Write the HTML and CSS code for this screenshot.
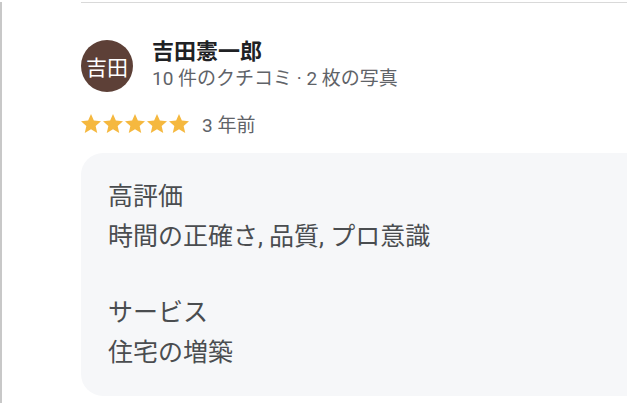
FILE: index.html
```html
<!DOCTYPE html>
<html lang="ja">
<head>
<meta charset="utf-8">
<link rel="stylesheet" href="styles.css">
</head>
<body>
<div class="frame">
  <div class="content">
    <div class="rule"></div>
    <div class="header">
      <div class="avatar">吉田</div>
      <div class="who">
        <div class="name">吉田憲一郎</div>
        <div class="meta">10 件のクチコミ · 2 枚の写真</div>
      </div>
    </div>
    <div class="rating">
      <div class="stars">
        <svg class="star" viewBox="1.9 2.2 20.2 19.2"><path d="M12 2.2l2.9 6.6 7.2.7-5.4 4.8 1.6 7.1L12 17.7l-6.3 3.7 1.6-7.1L1.9 9.5l7.2-.7z"/></svg>
        <svg class="star" viewBox="1.9 2.2 20.2 19.2"><path d="M12 2.2l2.9 6.6 7.2.7-5.4 4.8 1.6 7.1L12 17.7l-6.3 3.7 1.6-7.1L1.9 9.5l7.2-.7z"/></svg>
        <svg class="star" viewBox="1.9 2.2 20.2 19.2"><path d="M12 2.2l2.9 6.6 7.2.7-5.4 4.8 1.6 7.1L12 17.7l-6.3 3.7 1.6-7.1L1.9 9.5l7.2-.7z"/></svg>
        <svg class="star" viewBox="1.9 2.2 20.2 19.2"><path d="M12 2.2l2.9 6.6 7.2.7-5.4 4.8 1.6 7.1L12 17.7l-6.3 3.7 1.6-7.1L1.9 9.5l7.2-.7z"/></svg>
        <svg class="star" viewBox="1.9 2.2 20.2 19.2"><path d="M12 2.2l2.9 6.6 7.2.7-5.4 4.8 1.6 7.1L12 17.7l-6.3 3.7 1.6-7.1L1.9 9.5l7.2-.7z"/></svg>
      </div>
      <span class="when">3 年前</span>
    </div>
    <div class="card">
      <div class="group">
        <div class="line">高評価</div>
        <div class="line">時間の正確さ, 品質, プロ意識</div>
      </div>
      <div class="group">
        <div class="line">サービス</div>
        <div class="line">住宅の増築</div>
      </div>
    </div>
  </div>
</div>
</body>
</html>
```

FILE: styles.css
```css
html, body {
  margin: 0;
  padding: 0;
  background: #ffffff;
}
body {
  width: 627px;
  height: 403px;
  overflow: hidden;
  font-family: Roboto, "Noto Sans CJK JP", sans-serif;
}
.frame {
  height: 403px;
  border-left: 2px solid #c8c8c8;
  box-sizing: border-box;
}
.content {
  margin-left: 79px;
}
.rule {
  margin-top: 2px;
  height: 1px;
  background: #d9d9d9;
}
.header {
  display: flex;
  align-items: flex-start;
  margin-top: 35px;
}
.avatar {
  width: 52px;
  height: 52px;
  margin-top: 2px;
  border-radius: 50%;
  background: #5d4037;
  color: #ffffff;
  font-size: 21px;
  display: flex;
  align-items: center;
  justify-content: center;
  flex-shrink: 0;
}
.who {
  margin-left: 19px;
}
.name {
  font-size: 22px;
  line-height: 28px;
  font-weight: 700;
  color: #202124;
}
.meta {
  font-size: 19px;
  line-height: 26px;
  color: #5f6368;
}
.rating {
  display: flex;
  align-items: center;
  margin-top: 19px;
  height: 24px;
}
.stars {
  display: flex;
  gap: 2px;
}
.star {
  width: 20px;
  height: 19px;
  fill: #f5b83f;
}
.when {
  margin-left: 13px;
  font-size: 19px;
  color: #5f6368;
}
.card {
  margin-top: 18px;
  background: #f6f7f9;
  border-radius: 22px 0 0 22px;
  padding: 24px 27px 23px;
  color: #4a4d50;
  font-size: 25px;
  line-height: 40px;
}
.group + .group {
  margin-top: 36px;
}
```
